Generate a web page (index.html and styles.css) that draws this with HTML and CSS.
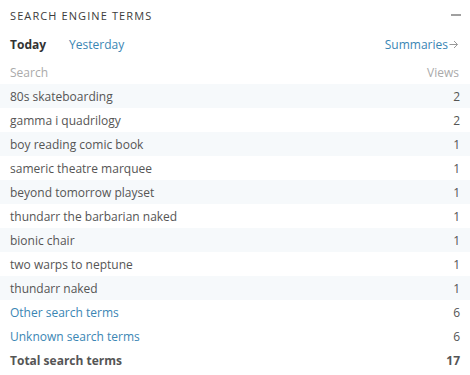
FILE: index.html
```html
<!DOCTYPE html>
<html>
<head>
  <title>Search Engine Terms</title>
  <link rel="stylesheet" href="styles.css">
</head>
<body>
  <div class="box">
    <div class="box-head">
      <h3>Search Engine Terms</h3>
      <span class="toggle"></span>
    </div>
    <div class="tabs">
      <span class="tab active">Today</span>
      <a class="tab" href="#">Yesterday</a>
      <a class="summaries" href="#">Summaries<svg width="10" height="9" viewBox="0 0 10 9"><path d="M0.5 4.5H8.5M5 1L8.5 4.5L5 8" fill="none" stroke="#999" stroke-width="1"/></svg></a>
    </div>
    <table class="terms">
      <thead>
        <tr>
          <th>Search</th>
          <th class="num">Views</th>
        </tr>
      </thead>
      <tbody>
        <tr><td>80s skateboarding</td><td class="num">2</td></tr>
        <tr><td>gamma i quadrilogy</td><td class="num">2</td></tr>
        <tr><td>boy reading comic book</td><td class="num">1</td></tr>
        <tr><td>sameric theatre marquee</td><td class="num">1</td></tr>
        <tr><td>beyond tomorrow playset</td><td class="num">1</td></tr>
        <tr><td>thundarr the barbarian naked</td><td class="num">1</td></tr>
        <tr><td>bionic chair</td><td class="num">1</td></tr>
        <tr><td>two warps to neptune</td><td class="num">1</td></tr>
        <tr><td>thundarr naked</td><td class="num">1</td></tr>
        <tr class="plain"><td><a href="#">Other search terms</a></td><td class="num">6</td></tr>
        <tr class="plain"><td><a href="#">Unknown search terms</a></td><td class="num">6</td></tr>
        <tr class="plain total"><td>Total search terms</td><td class="num">17</td></tr>
      </tbody>
    </table>
  </div>
</body>
</html>
```

FILE: styles.css
```css
body {
  margin: 0;
  background: #fff;
  font-family: 'Open Sans', 'Segoe UI', sans-serif;
  font-size: 12px;
  color: #555;
}
a {
  color: #3a86b4;
  text-decoration: none;
}
.box-head {
  display: flex;
  align-items: center;
  justify-content: space-between;
  height: 30px;
  padding: 0 9px 0 10px;
}
.box-head h3 {
  margin: 0;
  font-size: 11px;
  font-weight: normal;
  text-transform: uppercase;
  letter-spacing: 1.1px;
  color: #3c3c3c;
}
.toggle {
  width: 10px;
  height: 2px;
  background: #a0a0a0;
}
.tabs {
  display: flex;
  align-items: center;
  height: 28px;
  padding: 0 10px;
}
.tab {
  margin-right: 23px;
}
.tab.active {
  font-weight: bold;
  color: #333;
}
.summaries {
  margin-left: auto;
  display: flex;
  align-items: center;
  gap: 1px;
  margin-right: 1px;
}
.terms {
  width: 100%;
  border-collapse: collapse;
}
.terms th {
  font-weight: normal;
  color: #aaa;
  text-align: left;
  height: 24px;
  padding: 2px 10px 0;
}
.terms td {
  height: 24px;
  padding: 0 10px;
}
.terms .num {
  text-align: right;
}
.terms th.num {
  padding-right: 11px;
}
.terms tbody tr:nth-child(odd) {
  background: #f6f9fb;
}
.terms tbody tr.plain {
  background: none;
}
.total td {
  font-weight: bold;
  color: #555;
}
```
